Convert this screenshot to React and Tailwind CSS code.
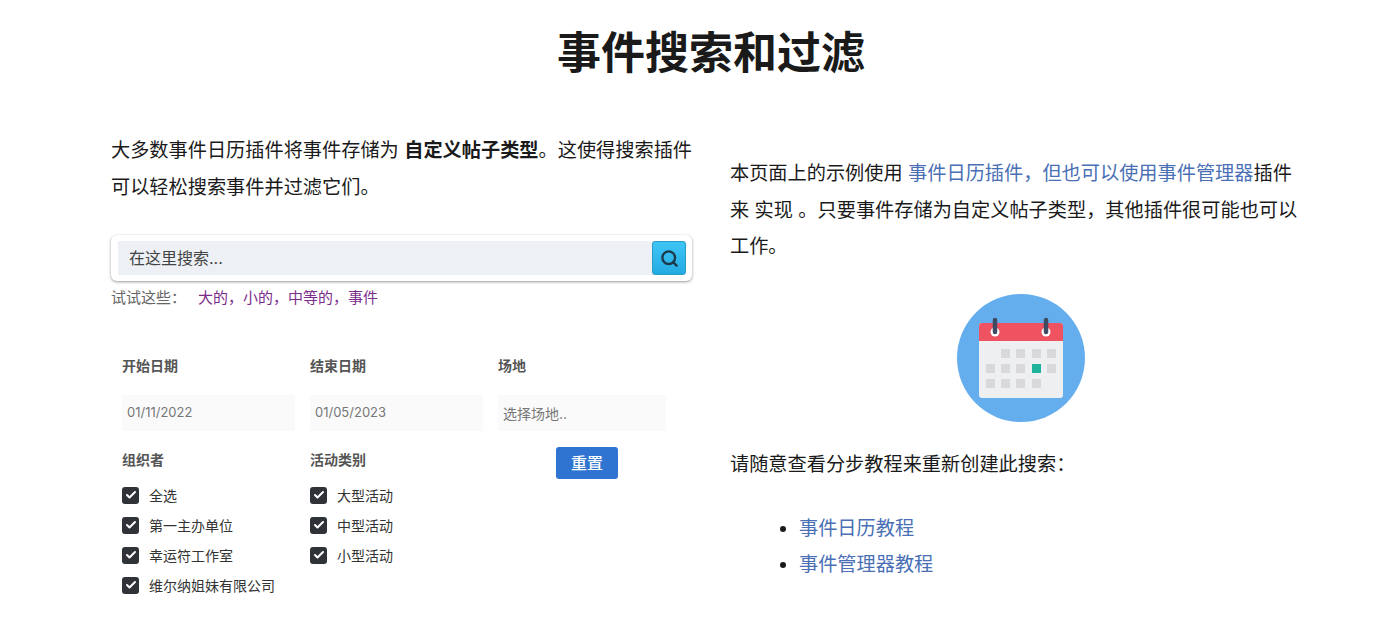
import React from 'react';
import { Check, Search } from 'lucide-react';

const FONT = "font-['Inter','Noto_Sans_CJK_SC',sans-serif]";

const organizers = ['全选', '第一主办单位', '幸运符工作室', '维尔纳姐妹有限公司'];
const categories = ['大型活动', '中型活动', '小型活动'];
const tags = ['大的', '小的', '中等的', '事件'];

const CheckRow = ({ label }) => (
  <div className="flex h-[30px] items-center gap-[10px]">
    <span className="flex h-[17px] w-[17px] items-center justify-center rounded-[3px] bg-[#2f3337]">
      <Check className="h-3 w-3 text-white" strokeWidth={4} />
    </span>
    <span className="text-[14px] text-[#333]">{label}</span>
  </div>
);

const FieldLabel = ({ children }) => (
  <div className="text-[14px] font-bold leading-5 text-[#555]">{children}</div>
);

const FieldBox = ({ children }) => (
  <div className="flex h-[36px] items-center bg-[#fafafa] px-[5px] text-[13px] text-[#777]">{children}</div>
);

const CalendarIcon = () => (
  <svg viewBox="0 0 128 128" className="h-[128px] w-[128px]">
    <circle cx="64" cy="64" r="64" fill="#64aeee" />
    <rect x="22" y="29" width="84" height="75" rx="3" fill="#eeeff1" />
    <path d="M22 47V32a3 3 0 0 1 3-3h78a3 3 0 0 1 3 3v15z" fill="#ef5261" />
    <circle cx="38" cy="38" r="4.5" fill="#fff" />
    <circle cx="89" cy="38" r="4.5" fill="#fff" />
    <path d="M38 26v12M89 26v12" stroke="#3e4b63" strokeWidth="4.5" strokeLinecap="round" />
    {[[44, 55], [59, 55], [75, 55], [90, 55], [29, 70], [44, 70], [59, 70], [90, 70], [29, 85], [44, 85], [59, 85], [75, 85]].map(([x, y]) => (
      <rect key={`${x}-${y}`} x={x} y={y} width="9" height="9" fill="#d9d9db" />
    ))}
    <rect x="75" y="70" width="9" height="9" fill="#1fb39b" />
  </svg>
);

const App = () => (
  <div className={`${FONT} h-[622px] w-[1382px] overflow-hidden bg-white text-[#1a1a1a]`}>
    <h1 className="pl-[40px] pt-[22px] text-center text-[44px] font-bold leading-[62px] text-[#1a1a1a]">事件搜索和过滤</h1>

    <div className="mt-[48px] flex gap-[38px] pl-[111px]">
      <div className="w-[581px]">
        <p className="-mr-[6px] text-[19.2px] leading-[37px]">
          大多数事件日历插件将事件存储为 <strong className="font-bold">自定义帖子类型</strong>。这使得搜索插件可以轻松搜索事件并过滤它们。
        </p>

        <div className="mt-[29px] rounded-[6px] bg-white py-[6px] pl-[7px] pr-[6px] shadow-[0_1px_3px_rgba(0,0,0,0.4)]">
          <div className="flex h-[34px] items-center bg-[#edf1f5]">
            <span className="flex-1 pl-[11px] text-[16px] text-[#444]">在这里搜索...</span>
            <span className="flex h-[34px] w-[34px] items-center justify-center rounded-[3px] border border-[#2a9cc8] bg-linear-to-b from-[#3fc5f5] to-[#22abe3]">
              <Search className="h-[19px] w-[19px] text-[#1c3a4a]" strokeWidth={3} />
            </span>
          </div>
        </div>

        <div className="mt-[7px] flex text-[15px] leading-5">
          <span className="w-[87px] text-[#666]">试试这些：</span>
          <span className="text-[#7b2d8b]">
            {tags.map((tag, i) => (
              <span key={tag}>{tag}{i < tags.length - 1 && '，'}</span>
            ))}
          </span>
        </div>

        <div className="mt-[48px] pl-[11px]">
          <div className="flex">
            <div className="w-[188px]">
              <FieldLabel>开始日期</FieldLabel>
              <div className="mt-[19px] w-[173px]"><FieldBox>01/11/2022</FieldBox></div>
            </div>
            <div className="w-[188px]">
              <FieldLabel>结束日期</FieldLabel>
              <div className="mt-[19px] w-[173px]"><FieldBox>01/05/2023</FieldBox></div>
            </div>
            <div className="w-[168px]">
              <FieldLabel>场地</FieldLabel>
              <div className="mt-[19px]">
                <div className="flex h-[36px] items-center bg-[#fafafa] px-[5px] text-[14px] text-[#777]">选择场地..</div>
              </div>
            </div>
          </div>

          <div className="mt-[19px] flex">
            <div className="w-[188px]">
              <FieldLabel>组织者</FieldLabel>
              <div className="mt-[10px]">
                {organizers.map((name) => <CheckRow key={name} label={name} />)}
              </div>
            </div>
            <div className="w-[188px]">
              <FieldLabel>活动类别</FieldLabel>
              <div className="mt-[10px]">
                {categories.map((name) => <CheckRow key={name} label={name} />)}
              </div>
            </div>
            <div className="w-[168px]">
              <button className="-mt-[3px] ml-[58px] h-[32px] w-[62px] rounded-[3px] bg-[#2f74d0] text-[16px] font-medium text-white">重置</button>
            </div>
          </div>
        </div>
      </div>

      <div className="w-[572px] pt-[23px]">
        <p className="text-[19.2px] leading-[36.5px]">
          本页面上的示例使用 <span className="text-[#4a6fb5]">事件日历插件，但也可以使用事件管理器</span>插件来 实现 。只要事件存储为自定义帖子类型，其他插件很可能也可以工作。
        </p>
        <div className="mt-[29px] flex justify-center pl-[10px]"><CalendarIcon /></div>
        <p className="mt-[24px] text-[19.2px] leading-[37px]">请随意查看分步教程来重新创建此搜索：</p>
        <ul className="mt-[27px] list-disc pl-[69px] text-[19.2px] leading-[36px] text-[#4a6fb5] marker:text-[#1a1a1a]">
          <li>事件日历教程</li>
          <li>事件管理器教程</li>
        </ul>
      </div>
    </div>
  </div>
);

export default App;
